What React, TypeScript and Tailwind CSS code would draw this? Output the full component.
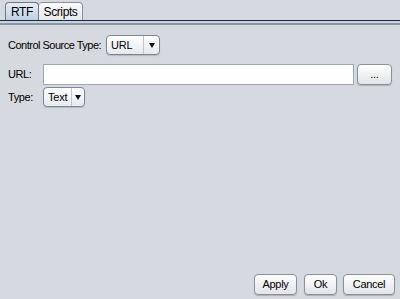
import React from "react";

function Select({ value, width, arrowW }: { value: string; width: string; arrowW: string }) {
  return (
    <div
      className={`flex h-[20px] ${width} items-stretch rounded-[4px] border border-[#7d8594] bg-gradient-to-b from-[#ffffff] to-[#e6e9ee] shadow-[0_1px_1px_rgba(0,0,0,0.15)]`}
    >
      <div className="flex flex-1 items-center pl-[4px] text-[11px] tracking-[-0.2px] text-black">{value}</div>
      <div className={`flex ${arrowW} items-center justify-center border-l border-[#c0c5ce]`}>
        <div className="h-0 w-0 border-x-[3.5px] border-t-[5px] border-x-transparent border-t-[#111]" />
      </div>
    </div>
  );
}

function Btn({ label, width, extra }: { label: string; width: string; extra?: string }) {
  return (
    <div
      className={`flex h-[21px] ${width} items-center justify-center rounded-[4px] border border-[#8b909a] bg-gradient-to-b from-[#ffffff] to-[#e2e4e8] text-[11px] tracking-[-0.3px] text-black shadow-[0_1px_1px_rgba(0,0,0,0.2)] ${extra ?? ""}`}
    >
      {label}
    </div>
  );
}

export default function App() {
  return (
    <div
      className="flex h-[299px] w-[400px] flex-col bg-[#d6d9df] text-black"
      style={{ fontFamily: '"Liberation Sans", Arial, sans-serif' }}
    >
      <div className="flex items-end pl-[5px] pt-[2px]">
        <div className="flex h-[18px] w-[34px] items-center justify-center rounded-t-[4px] border border-b-0 border-[#6f7684] bg-gradient-to-b from-[#e6edf5] to-[#bfd0e3] text-[12px] tracking-[-0.3px]">
          RTF
        </div>
        <div className="flex h-[18px] w-[44px] items-center justify-center rounded-t-[4px] border border-b-0 border-l-0 border-[#8a909c] bg-gradient-to-b from-[#fbfbfc] to-[#e6e8ec] text-[12px] tracking-[-0.4px]">
          Scripts
        </div>
      </div>
      <div className="h-[1px] bg-[#1e2330]" />
      <div className="h-[2px] bg-[#c5d5e8]" />
      <div className="h-[2px] bg-[#8d96a5]" />
      <div className="flex flex-1 flex-col pl-[8px] pr-[5px]">
        <div className="mt-[10px] flex items-center">
          <span className="w-[98px] text-[11px] tracking-[-0.5px]">Control Source Type:</span>
          <Select value="URL" width="w-[54px]" arrowW="w-[16px]" />
        </div>
        <div className="mt-[9px] flex items-center">
          <span className="w-[35px] text-[11px] tracking-[-0.4px]">URL:</span>
          <div className="h-[21px] w-[311px] border border-[#a0a6b0] bg-white" />
          <Btn label="..." width="w-[35px]" extra="ml-[3px]" />
        </div>
        <div className="mt-[2px] flex items-center">
          <span className="w-[35px] text-[11px] tracking-[-0.4px]">Type:</span>
          <Select value="Text" width="w-[42px]" arrowW="w-[13px]" />
        </div>
        <div className="flex-1" />
        <div className="mb-[4px] flex justify-end">
          <Btn label="Apply" width="w-[43px]" />
          <Btn label="Ok" width="w-[33px]" extra="ml-[7px]" />
          <Btn label="Cancel" width="w-[52px]" extra="ml-[6px]" />
        </div>
      </div>
    </div>
  );
}
